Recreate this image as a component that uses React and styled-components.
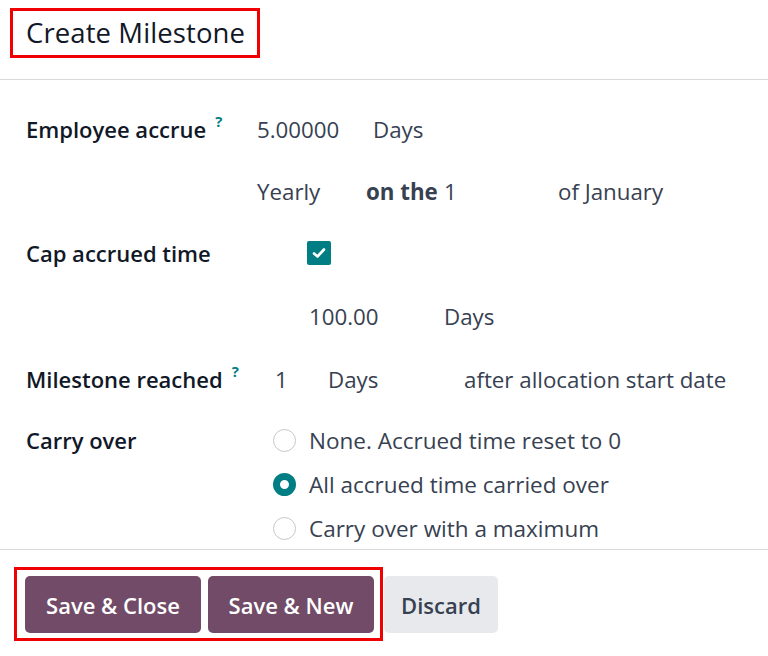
import styled, { createGlobalStyle } from "styled-components";

const GlobalStyle = createGlobalStyle`
  html, body {
    margin: 0;
    padding: 0;
    background: #fff;
  }
  body {
    font-family: "Open Sans", "Noto Sans", sans-serif;
    color: #374151;
  }
`;

export default function App() {
  return (
    <>
      <GlobalStyle />
      <Dialog>
        <Header>
          <TitleBox>
            <Title>Create Milestone</Title>
          </TitleBox>
        </Header>

        <Body>
          <Row $h={62}>
            <Label>
              Employee accrue<Help>?</Help>
            </Label>
            <Values $indent={257}>
              <Value $w={116}>5.00000</Value>
              <Value>Days</Value>
            </Values>
          </Row>

          <Row $h={62}>
            <Label />
            <Values $indent={257}>
              <Value $w={109}>Yearly</Value>
              <Value $bold $w={78}>on the</Value>
              <Value $w={114}>1</Value>
              <Value>of January</Value>
            </Values>
          </Row>

          <Row $h={62}>
            <Label>Cap accrued time</Label>
            <Values $indent={307}>
              <Checkbox>
                <svg width="14" height="12" viewBox="0 0 14 12">
                  <path
                    d="M2 6.5 L5.5 9.5 L12 2.5"
                    fill="none"
                    stroke="#fff"
                    strokeWidth="2.6"
                    strokeLinecap="round"
                    strokeLinejoin="round"
                  />
                </svg>
              </Checkbox>
            </Values>
          </Row>

          <Row $h={64}>
            <Label />
            <Values $indent={309}>
              <Value $w={135}>100.00</Value>
              <Value>Days</Value>
            </Values>
          </Row>

          <Row $h={62}>
            <Label>
              Milestone reached<Help>?</Help>
            </Label>
            <Values $indent={275}>
              <Value $w={53}>1</Value>
              <Value $w={136}>Days</Value>
              <Value>after allocation start date</Value>
            </Values>
          </Row>

          <CarryRow>
            <Label $tall>Carry over</Label>
            <RadioList>
              <RadioItem>
                <Radio />
                <span>None. Accrued time reset to 0</span>
              </RadioItem>
              <RadioItem>
                <Radio $checked />
                <span>All accrued time carried over</span>
              </RadioItem>
              <RadioItem>
                <Radio />
                <span>Carry over with a maximum</span>
              </RadioItem>
            </RadioList>
          </CarryRow>
        </Body>

        <Footer>
          <ButtonGroup>
            <PrimaryButton $w={176}>Save &amp; Close</PrimaryButton>
            <PrimaryButton $w={166}>Save &amp; New</PrimaryButton>
          </ButtonGroup>
          <SecondaryButton $w={114}>Discard</SecondaryButton>
        </Footer>
      </Dialog>
    </>
  );
}

const Dialog = styled.div`
  width: 768px;
  height: 656px;
  display: flex;
  flex-direction: column;
  overflow: hidden;
  background: #fff;
`;

const Header = styled.header`
  height: 80px;
  box-sizing: border-box;
  border-bottom: 1px solid #d8dadd;
  padding: 8px 0 0 10px;
  flex-shrink: 0;
`;

const TitleBox = styled.div`
  display: inline-flex;
  align-items: center;
  box-sizing: border-box;
  height: 50px;
  width: 250px;
  border: 3px solid #f00000;
  padding: 0 0 2px 13px;
`;

const Title = styled.h1`
  margin: 0;
  font-size: 27.5px;
  font-weight: 500;
  color: #111827;
  letter-spacing: 0.1px;
  white-space: nowrap;
`;

const Body = styled.main`
  height: 469px;
  flex-shrink: 0;
  overflow: hidden;
  box-sizing: border-box;
  padding: 18px 0 0 26px;
`;

const Row = styled.div`
  height: ${(p) => p.$h}px;
  display: flex;
  align-items: center;
`;

const Label = styled.div`
  width: 0;
  white-space: nowrap;
  font-size: 22px;
  font-weight: 600;
  color: #111827;
  line-height: 1;
  align-self: ${(p) => (p.$tall ? "flex-start" : "center")};
  padding-top: ${(p) => (p.$tall ? "11px" : "0")};
`;

const Help = styled.sup`
  font-size: 15px;
  font-weight: 700;
  color: #017e84;
  margin-left: 9px;
  position: relative;
  top: -3px;
`;

const Values = styled.div`
  display: flex;
  align-items: center;
  margin-left: ${(p) => p.$indent - 26}px;
`;

const Value = styled.span`
  font-size: 22.3px;
  font-weight: ${(p) => (p.$bold ? 700 : 400)};
  color: #374151;
  white-space: nowrap;
  width: ${(p) => (p.$w ? `${p.$w}px` : "auto")};
`;

const Checkbox = styled.span`
  width: 24px;
  height: 24px;
  background: #017e84;
  border-radius: 2px;
  display: flex;
  align-items: center;
  justify-content: center;
`;

const CarryRow = styled.div`
  display: flex;
  padding-top: 8px;
`;

const RadioList = styled.div`
  margin-left: 247px;
  display: flex;
  flex-direction: column;
`;

const RadioItem = styled.label`
  height: 44px;
  display: flex;
  align-items: center;
  gap: 13px;
  font-size: 22.5px;
  color: #374151;
  white-space: nowrap;
`;

const Radio = styled.span`
  width: 23px;
  height: 23px;
  box-sizing: border-box;
  border-radius: 50%;
  border: ${(p) => (p.$checked ? "7px solid #017e84" : "1.5px solid #c5c7cb")};
  background: #fff;
  flex-shrink: 0;
`;

const Footer = styled.footer`
  flex: 1;
  border-top: 1px solid #d8dadd;
  display: flex;
  align-items: flex-start;
  padding: 17px 0 0 14px;
`;

const ButtonGroup = styled.div`
  display: flex;
  gap: 7px;
  border: 3px solid #f00000;
  padding: 6px 6px 5px 8px;
`;

const ButtonBase = styled.button`
  width: ${(p) => p.$w}px;
  height: 57px;
  padding: 0;
  border: none;
  border-radius: 5px;
  font-family: "Open Sans", "Noto Sans", sans-serif;
  font-size: 22px;
  font-weight: 600;
  white-space: nowrap;
  cursor: pointer;
`;

const PrimaryButton = styled(ButtonBase)`
  background: #714b67;
  color: #fff;
`;

const SecondaryButton = styled(ButtonBase)`
  margin-top: 9px;
  margin-left: 1px;
  background: #e7e9ed;
  color: #374151;
`;
